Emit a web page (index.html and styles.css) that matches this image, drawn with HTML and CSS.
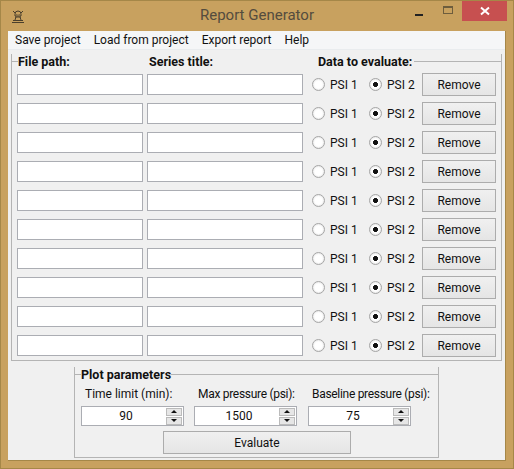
FILE: index.html
```html
<!DOCTYPE html>
<html lang="en">
<head>
<meta charset="utf-8">
<title>Report Generator</title>
<link rel="stylesheet" href="styles.css">
</head>
<body>
<div class="window">
  <div class="titlebar">
    <svg class="app-icon" width="16" height="16" viewBox="0 0 16 16"><path d="M2 14.500h12M3 12.500h10M5 12l1-3M11 12l-1-3M5 9h6M5 6a3 3 0 0 1 6 0v2H5zM3 3l2 2M13 3l-2 2M6.500 6.500h.8M8.700 6.500h.8" fill="none" stroke="#4a3f2c" stroke-width="1"/></svg>
    <div class="title">Report Generator</div>
    <div class="controls">
      <div class="ctl"><span class="min"></span></div>
      <div class="ctl"><span class="max"></span></div>
      <div class="close"><svg width="10" height="10" viewBox="0 0 10 10"><path d="M1 1.500l8 7M9 1.500l-8 7" stroke="#fff" stroke-width="2"/></svg></div>
    </div>
  </div>
  <div class="client">
    <div class="menubar"><span>Save project</span><span>Load from project</span><span>Export report</span><span>Help</span></div>
    <div class="content">
      <div class="group">
        <div class="group-head">
          <span class="stub"></span>
          <b class="h-file">File path:</b>
          <b class="h-series">Series title:</b>
          <b class="h-data">Data to evaluate:</b>
          <span class="rule"></span>
        </div>
        <div class="row"><input class="field path"><input class="field series"><label class="opt"><input type="radio" name="r1">PSI 1</label><label class="opt"><input type="radio" name="r1" checked>PSI 2</label><button class="btn remove">Remove</button></div>
        <div class="row"><input class="field path"><input class="field series"><label class="opt"><input type="radio" name="r2">PSI 1</label><label class="opt"><input type="radio" name="r2" checked>PSI 2</label><button class="btn remove">Remove</button></div>
        <div class="row"><input class="field path"><input class="field series"><label class="opt"><input type="radio" name="r3">PSI 1</label><label class="opt"><input type="radio" name="r3" checked>PSI 2</label><button class="btn remove">Remove</button></div>
        <div class="row"><input class="field path"><input class="field series"><label class="opt"><input type="radio" name="r4">PSI 1</label><label class="opt"><input type="radio" name="r4" checked>PSI 2</label><button class="btn remove">Remove</button></div>
        <div class="row"><input class="field path"><input class="field series"><label class="opt"><input type="radio" name="r5">PSI 1</label><label class="opt"><input type="radio" name="r5" checked>PSI 2</label><button class="btn remove">Remove</button></div>
        <div class="row"><input class="field path"><input class="field series"><label class="opt"><input type="radio" name="r6">PSI 1</label><label class="opt"><input type="radio" name="r6" checked>PSI 2</label><button class="btn remove">Remove</button></div>
        <div class="row"><input class="field path"><input class="field series"><label class="opt"><input type="radio" name="r7">PSI 1</label><label class="opt"><input type="radio" name="r7" checked>PSI 2</label><button class="btn remove">Remove</button></div>
        <div class="row"><input class="field path"><input class="field series"><label class="opt"><input type="radio" name="r8">PSI 1</label><label class="opt"><input type="radio" name="r8" checked>PSI 2</label><button class="btn remove">Remove</button></div>
        <div class="row"><input class="field path"><input class="field series"><label class="opt"><input type="radio" name="r9">PSI 1</label><label class="opt"><input type="radio" name="r9" checked>PSI 2</label><button class="btn remove">Remove</button></div>
        <div class="row"><input class="field path"><input class="field series"><label class="opt"><input type="radio" name="r10">PSI 1</label><label class="opt"><input type="radio" name="r10" checked>PSI 2</label><button class="btn remove">Remove</button></div>
      </div>
      <div class="plot">
        <div class="plot-head"><span class="stub"></span><b>Plot parameters</b><span class="rule"></span></div>
        <div class="params">
          <div class="param"><div class="param-label">Time limit (min):</div><div class="spin"><span class="value">90</span><span class="arrows"><i class="up"></i><i class="down"></i></span></div></div>
          <div class="param"><div class="param-label tight">Max pressure (psi):</div><div class="spin"><span class="value">1500</span><span class="arrows"><i class="up"></i><i class="down"></i></span></div></div>
          <div class="param"><div class="param-label tight">Baseline pressure (psi):</div><div class="spin"><span class="value">75</span><span class="arrows"><i class="up"></i><i class="down"></i></span></div></div>
        </div>
        <button class="btn evaluate">Evaluate</button>
      </div>
    </div>
  </div>
</div>
</body>
</html>
```
FILE: styles.css
```css
* { box-sizing: border-box; }
html, body { margin: 0; padding: 0; }
body { width: 514px; height: 469px; overflow: hidden; font-family: Roboto, "Open Sans", sans-serif; font-size: 12px; color: #111; }
.window { width: 514px; height: 469px; background: #c8a15f; border: 1px solid #a58748; display: flex; flex-direction: column; padding: 0 7px 7px; }
.titlebar { height: 30px; flex: none; display: flex; align-items: flex-start; position: relative; }
.app-icon { margin: 7px 0 0 2px; flex: none; }
.title { position: absolute; left: 0; right: 0; top: 4px; text-align: center; font-size: 15px; line-height: 20px; color: #544c3e; }
.controls { margin-left: auto; display: flex; margin-right: -1px; }
.ctl { width: 29px; height: 20px; display: flex; align-items: center; justify-content: center; }
.min { width: 8px; height: 2px; background: #222; margin-top: 7px; }
.max { width: 10px; height: 8px; border: 1px solid #6d5d3d; border-top-width: 2px; margin-top: -2px; }
.close { width: 45px; height: 20px; background: #c75050; display: flex; align-items: center; justify-content: center; }
.client { flex: 1; background: #f0f0f0; border: 1px solid #a58748; border-top: 0; border-left: 0; display: flex; flex-direction: column; }
.menubar { height: 19px; background: #f5f6f7; border-bottom: 1px solid #e9ecee; display: flex; gap: 13px; padding-left: 7px; line-height: 19px; flex: none; }
.content { flex: 1; padding: 4px 4px 0 3px; display: flex; flex-direction: column; align-items: flex-start; }
.group { width: 491px; height: 307px; border: 1px solid #b4b4b4; border-top: 0; flex: none; }
.group-head { display: flex; height: 16px; margin: 0 -1px; align-items: flex-start; }
.group-head b, .plot-head b { font-weight: 700; font-size: 12.5px; line-height: 16px; white-space: nowrap; }
.stub { width: 7px; height: 1px; background: #b4b4b4; flex: none; margin-top: 7px; }
.rule { flex: 1; height: 1px; background: #b4b4b4; margin-top: 7px; }
.group-head .h-file { width: 131px; }
.group-head .h-series { width: 169px; }
.group-head .h-data { width: 96px; }
.row { display: flex; align-items: center; height: 29px; padding-left: 5px; }
.row .field { height: 21px; border: 1px solid #abadb3; background: #fff; padding: 0; margin: 0; outline: 0; flex: none; }
.path { width: 126px; margin-right: 4px !important; }
.series { width: 156px; margin-right: 9px !important; }
.opt { display: flex; align-items: center; width: 57px; gap: 5px; line-height: 16px; }
.opt input { appearance: none; width: 13px; height: 13px; margin: 0; border: 1px solid #a5a5a5; border-radius: 50%; background: #fff; box-shadow: inset 0 0 2px #ccc; flex: none; }
.opt input:checked { background: radial-gradient(circle, #111 0 2.2px, #fff 2.8px); }
.btn { font: inherit; color: #111; border: 1px solid #acacac; background: linear-gradient(#f0f0f0, #e5e5e5); padding: 0; }
.remove { width: 74px; height: 23px; margin-left: -4px; }
.plot { width: 365px; height: 91px; margin: 6px 0 0 63px; border: 1px solid #b4b4b4; border-top: 0; display: flex; flex-direction: column; flex: none; }
.plot-head { display: flex; height: 19px; margin: 0 -1px; align-items: flex-start; }
.params { display: flex; gap: 9px; padding-left: 6px; }
.param { width: 104px; display: flex; flex-direction: column; flex: none; }
.param:nth-child(2) { width: 105px; }
.param-label { height: 20px; line-height: 16px; white-space: nowrap; padding: 0 0 0 4px; }
.tight { letter-spacing: -.3px; }
.spin { width: 103px; height: 20px; border: 1px solid #abadb3; background: #fff; display: flex; }
.value { flex: 1; text-align: center; line-height: 18px; padding-left: 4px; }
.arrows { width: 16px; flex: none; display: flex; flex-direction: column; justify-content: center; gap: 1px; margin-right: 1px; }
.arrows i { display: flex; height: 8px; background: #e6e6e6; border: 1px solid #bbb; align-items: center; justify-content: center; }
.arrows i::before { content: ""; border: 3px solid transparent; }
.up::before { border-bottom-color: #111 !important; border-top-width: 0 !important; }
.down::before { border-top-color: #111 !important; border-bottom-width: 0 !important; }
.evaluate { width: 188px; height: 23px; margin: 5px 0 0 88px; flex: none; }
```
